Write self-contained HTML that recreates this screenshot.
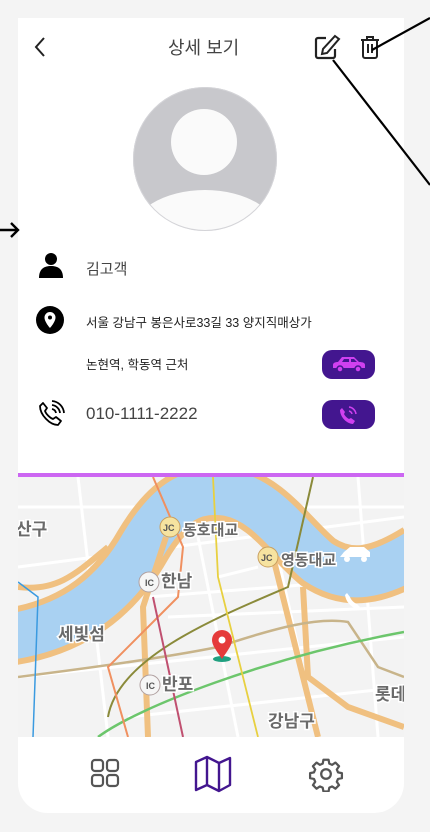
<!DOCTYPE html>
<html><head><meta charset="utf-8"><style>
*{margin:0;padding:0;box-sizing:border-box}
body{width:430px;height:832px;background:#f4f4f4;position:relative;overflow:hidden;font-family:"Liberation Sans","Noto Sans CJK KR",sans-serif}
.card{position:absolute;left:18px;top:18px;width:386px;height:795px;background:#fff;border-radius:0 0 30px 30px;overflow:hidden}
.abs{position:absolute}
.t{position:absolute;white-space:nowrap}
.btn{position:absolute;left:304px;width:53px;height:29px;border-radius:10px;background:#43168f}
</style></head><body>
<div class="card">
 <svg class="abs" style="left:14px;top:18px" width="16" height="22" viewBox="0 0 16 22"><path d="M12 2 L4 11 L12 20" fill="none" stroke="#222" stroke-width="2"/></svg>
 <div class="t" style="left:150px;top:16px;font-size:18px;color:#444">상세 보기</div>
 <svg class="abs" style="left:295px;top:16px" width="28" height="28" viewBox="0 0 28 28"><path d="M13 4 H5 a2 2 0 0 0 -2 2 V22 a2 2 0 0 0 2 2 H20 a2 2 0 0 0 2 -2 V15" fill="none" stroke="#222" stroke-width="2.2"/><path d="M22 2 L26 5 L14 19 L9 20 L10 15 Z" fill="none" stroke="#222" stroke-width="2"/></svg>
 <svg class="abs" style="left:341px;top:17px" width="22" height="24" viewBox="0 0 22 24"><path d="M2 5 H20 M8 5 V2 H14 V5 M4 5 V21 a2 2 0 0 0 2 2 H16 a2 2 0 0 0 2 -2 V5 M9 9 V18 M13 9 V18" fill="none" stroke="#222" stroke-width="2"/></svg>
 <svg class="abs" style="left:114px;top:68px" width="146" height="146" viewBox="0 0 146 146"><defs><clipPath id="c"><circle cx="73" cy="73" r="72"/></clipPath></defs><circle cx="73" cy="73" r="72" fill="#c8c8cc"/><circle cx="72" cy="56" r="33" fill="#fafafa"/><ellipse cx="73" cy="150" rx="75" ry="46" fill="#fafafa" clip-path="url(#c)"/><circle cx="73" cy="73" r="71.5" fill="none" stroke="#d4d4d8" stroke-width="1"/></svg>
 <svg class="abs" style="left:20px;top:234px" width="26" height="26" viewBox="0 0 26 26"><circle cx="13" cy="7" r="6" fill="#000"/><path d="M1 26 C1 17 6 14 13 14 C20 14 25 17 25 26 Z" fill="#000"/></svg>
 <div class="t" style="left:68px;top:240px;font-size:15px;color:#444">김고객</div>
 <svg class="abs" style="left:17px;top:287px" width="30" height="30" viewBox="0 0 30 30"><circle cx="15" cy="15" r="14" fill="#000"/><path d="M15 7 a5.5 5.5 0 0 1 5.5 5.5 C20.5 17 15 23 15 23 C15 23 9.5 17 9.5 12.5 A5.5 5.5 0 0 1 15 7 Z" fill="#fff"/><circle cx="15" cy="12.5" r="2" fill="#000"/></svg>
 <div class="t" style="left:68px;top:294px;font-size:12.5px;color:#222">서울 강남구 봉은사로33길 33 양지직매상가</div>
 <div class="t" style="left:68px;top:336px;font-size:12.5px;color:#222">논현역, 학동역 근처</div>
 <div class="btn" style="top:332px"><svg class="abs" style="left:10px;top:6px" width="34" height="17" viewBox="0 0 34 17"><path d="M1 12 V9 C1 7 3 6 6 6 L10 1 H22 L27 6 C31 6 33 7 33 9 V12 Z" fill="#d040f0"/><path d="M12 3 H17 V6 H10 Z M19 3 H22 L25 6 H19 Z" fill="#43168f"/><circle cx="8" cy="13" r="3" fill="#d040f0" stroke="#43168f" stroke-width="1.5"/><circle cx="26" cy="13" r="3" fill="#d040f0" stroke="#43168f" stroke-width="1.5"/></svg></div>
 <svg class="abs" style="left:19px;top:382px" width="28" height="28" viewBox="0 0 28 28"><path d="M6 3 L10 8 L8 11 C9 14 13 18 16 19 L19 17 L24 21 L21 25 C13 25 3 15 3 6 Z" fill="none" stroke="#000" stroke-width="1.8" stroke-linejoin="round"/><path d="M15 9 a5 5 0 0 1 4 4 M15 5 a9 9 0 0 1 8 8 M15 1 a13 13 0 0 1 12 12" fill="none" stroke="#000" stroke-width="1.8"/></svg>
 <div class="t" style="left:68px;top:386px;font-size:17px;color:#444">010-1111-2222</div>
 <div class="btn" style="top:382px"><svg class="abs" style="left:16px;top:5px" width="20" height="20" viewBox="0 0 20 20"><path d="M4 3 L7 7 L6 9 C7 11 9 13 11 14 L13 13 L17 16 L15 19 C9 19 2 12 2 5 Z" fill="#d040f0"/><path d="M11 6 a4 4 0 0 1 3 3 M11 2 a8 8 0 0 1 7 7" fill="none" stroke="#d040f0" stroke-width="1.5"/></svg></div>
 <div class="abs" style="left:0;top:455px;width:386px;height:4px;background:#cc66f2"></div>
 <svg class="abs" style="left:0;top:459px" width="386" height="260" viewBox="0 0 386 260" font-family="Liberation Sans,Noto Sans CJK KR,sans-serif">
  <rect width="386" height="260" fill="#f3f3f3"/>
  <g stroke="#fff" stroke-width="3" fill="none"><path d="M0 30 H386 M0 90 L386 40 M0 200 L386 160 M60 0 L90 260 M180 60 L220 260 M260 80 L300 260 M130 120 L386 100 M110 240 L386 210 M340 0 L360 260 M150 140 L386 130 M200 100 L240 90"/></g>
  <path d="M-10 160 C60 150 100 112 125 68 C150 26 175 10 210 16 C250 24 270 60 300 85 C330 105 360 100 400 75" fill="none" stroke="#f0c080" stroke-width="58"/>
  <path d="M-10 160 C60 150 100 112 125 68 C150 26 175 10 210 16 C250 24 270 60 300 85 C330 105 360 100 400 75" fill="none" stroke="#a9d1f2" stroke-width="46"/>
  <path d="M0 110 C40 115 60 95 90 70 M130 260 L125 130 L148 60 M255 80 L300 260 M285 110 L290 200 L330 230 L386 250" fill="none" stroke="#f0c080" stroke-width="6"/>
  <path d="M0 200 C80 190 150 180 200 170 C260 150 300 140 330 145 L360 190 L386 200" fill="none" stroke="#c8b48a" stroke-width="2.5"/>
  <path d="M80 260 C120 230 250 180 386 155" fill="none" stroke="#6cc66c" stroke-width="2.5"/>
  <path d="M90 240 C100 180 200 140 270 110 L295 0" fill="none" stroke="#8a8a3a" stroke-width="2"/>
  <path d="M135 0 L165 70 L160 120 L90 190 L110 260" fill="none" stroke="#f09060" stroke-width="2"/>
  <path d="M195 0 L200 100 L240 260" fill="none" stroke="#e8d040" stroke-width="1.8"/>
  <path d="M135 120 L165 260" fill="none" stroke="#c05070" stroke-width="2"/>
  <path d="M0 105 L20 120 L15 260" fill="none" stroke="#3a9ae0" stroke-width="1.5"/>
  <g font-size="17" font-weight="bold" fill="#6a6a6a" stroke="#fff" stroke-width="3" paint-order="stroke">
   <text x="-2" y="58">산구</text><text x="165" y="58" font-size="15">동호대교</text><text x="263" y="88" font-size="15">영동대교</text>
   <text x="143" y="110">한남</text><text x="40" y="163">세빛섬</text><text x="144" y="213">반포</text><text x="250" y="250">강남구</text><text x="357" y="223">롯데</text>
  </g>
  <g font-size="9" font-weight="bold" fill="#555"><circle cx="152" cy="50" r="10" fill="#f6e3a0" stroke="#c9a060"/><text x="145" y="54">JC</text>
   <circle cx="250" cy="80" r="10" fill="#f6e3a0" stroke="#c9a060"/><text x="243" y="84">JC</text>
   <circle cx="131" cy="105" r="10" fill="#f6f6f6" stroke="#b0a0a0"/><text x="127" y="109">IC</text>
   <circle cx="132" cy="208" r="10" fill="#f6f6f6" stroke="#b0a0a0"/><text x="128" y="212">IC</text></g>
  <path d="M322 80 H352 V75 L346 70 H332 L326 75 Z" fill="#fff"/><circle cx="329" cy="82" r="3" fill="#fff"/><circle cx="346" cy="82" r="3" fill="#fff"/>
  <path d="M329 116 L332 120 C333 123 336 126 339 127 L342 130 L339 132 C333 130 328 125 327 118 Z" fill="#fff"/>
  <ellipse cx="204" cy="182" rx="9" ry="3" fill="#20a080"/>
  <path d="M204 182 C198 173 194 168 194 163 A10 10 0 0 1 214 163 C214 168 210 173 204 182 Z" fill="#e53a3a"/><circle cx="204" cy="163" r="3.5" fill="#fff"/>
 </svg>
 <svg class="abs" style="left:72px;top:740px" width="30" height="30" viewBox="0 0 30 30" fill="none" stroke="#555" stroke-width="2.2"><rect x="2" y="2" width="11" height="11" rx="3"/><rect x="17" y="2" width="11" height="11" rx="3"/><rect x="2" y="17" width="11" height="11" rx="3"/><rect x="17" y="17" width="11" height="11" rx="3"/></svg>
 <svg class="abs" style="left:176px;top:737px" width="38" height="38" viewBox="0 0 38 38" fill="none" stroke="#43168f" stroke-width="2.4" stroke-linejoin="round"><path d="M2 7 L13 2 L25 8 L36 3 V30 L25 36 L13 30 L2 35 Z M13 2 V30 M25 8 V36"/></svg>
 <svg class="abs" style="left:290px;top:738px" width="36" height="36" viewBox="0 0 24 24" fill="none" stroke="#555" stroke-width="1.5"><circle cx="12" cy="12" r="3.2"/><path d="M10.3 2.5h3.4l.5 2.6 1.9.8 2.2-1.5 2.4 2.4-1.5 2.2.8 1.9 2.6.5v3.4l-2.6.5-.8 1.9 1.5 2.2-2.4 2.4-2.2-1.5-1.9.8-.5 2.6h-3.4l-.5-2.6-1.9-.8-2.2 1.5-2.4-2.4 1.5-2.2-.8-1.9-2.6-.5v-3.4l2.6-.5.8-1.9-1.5-2.2 2.4-2.4 2.2 1.5 1.9-.8z" stroke-linejoin="round"/></svg>
</div>
<svg class="abs" style="left:0;top:0" width="430" height="832"><path d="M372 50 L430 18 M333 60 L430 185" stroke="#000" stroke-width="2.2"/><path d="M0 230 H18 M11 223 L18 230 L11 237" fill="none" stroke="#000" stroke-width="2.4"/></svg>
</body></html>
